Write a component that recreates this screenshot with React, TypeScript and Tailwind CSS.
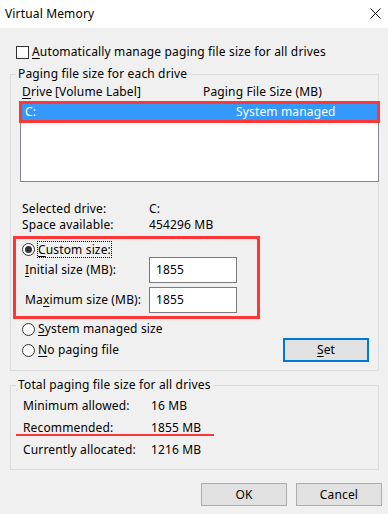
import React from "react";

function U({ children }: { children: React.ReactNode }) {
  return <span className="underline decoration-1 underline-offset-[2px]">{children}</span>;
}

function Radio({ checked }: { checked?: boolean }) {
  return (
    <span className="w-[13px] h-[13px] rounded-full border border-[#333333] bg-white flex items-center justify-center shrink-0">
      {checked && <span className="w-[7px] h-[7px] rounded-full bg-[#333333]" />}
    </span>
  );
}

function Btn({ children, focused }: { children: React.ReactNode; focused?: boolean }) {
  return (
    <button
      className={
        focused
          ? "w-[86px] h-[24px] bg-[#e1e1e1] border-2 border-[#0078d7] flex items-center justify-center"
          : "w-[86px] h-[23px] bg-[#e1e1e1] border border-[#adadad] flex items-center justify-center"
      }
    >
      {children}
    </button>
  );
}

export default function App() {
  return (
    <div className="w-[388px] h-[514px] bg-[#f0f0f0] text-[12px] leading-[16px] tracking-[0.15px] text-black font-['Noto_Sans',sans-serif] flex flex-col overflow-hidden">
      {/* Title bar */}
      <div className="h-[28px] shrink-0 bg-white flex items-center justify-between pl-[5px] pr-[7px]">
        <span className="text-[12px]">Virtual Memory</span>
        <svg width="11" height="11" viewBox="0 0 11 11" className="mt-[-2px]">
          <path d="M0.5 0.5 L10.5 10.5 M10.5 0.5 L0.5 10.5" stroke="#000" strokeWidth="1" />
        </svg>
      </div>

      <div className="pl-[10px] pr-[9px] flex flex-col">
        {/* Auto checkbox */}
        <div className="mt-[16px] ml-[6px] h-[16px] flex items-center gap-[3px]">
          <span className="w-[13px] h-[13px] border border-[#333333] bg-white shrink-0" />
          <span>
            <U>A</U>utomatically manage paging file size for all drives
          </span>
        </div>

        {/* Group 1 */}
        <fieldset className="mt-[6px] w-[369px] border border-[#dcdcdc]">
          <legend className="ml-[5px] px-[2px] leading-[16px]">Paging file size for each drive</legend>
          <div className="flex flex-col">
            <div className="mt-[2px] h-[16px] pl-[11px] flex">
              <span className="w-[33px]">
                <U>D</U>rive
              </span>
              <span className="w-[148px]">[Volume Label]</span>
              <span>Paging File Size (MB)</span>
            </div>

            <div className="relative mt-[1px] ml-[9px] -mr-[1px] h-[81px] bg-white border border-[#828790]">
              <div className="mt-[2px] mx-px h-[16px] bg-[#3399ff] text-white flex pl-[3px]">
                <span className="w-[211px]">C:</span>
                <span>System managed</span>
              </div>
              <div className="absolute left-[-2px] top-[-1px] w-[361px] h-[22px] border-[3px] border-[#ff3636]" />
            </div>

            <div className="mt-[19px] pl-[11px] flex">
              <span className="w-[127px]">Selected drive:</span>
              <span>C:</span>
            </div>
            <div className="pl-[11px] flex">
              <span className="w-[127px]">Space available:</span>
              <span>454296 MB</span>
            </div>

            {/* Custom size block */}
            <div className="relative mt-[8px] flex flex-col">
              <div className="h-[16px] pl-[11px] flex items-center gap-[2px]">
                <Radio checked />
                <span className="h-[17px] mt-[1px] border border-dotted border-black px-0 leading-[15px]">
                  <U>C</U>ustom size:
                </span>
              </div>
              <div className="h-[26px] pl-[14px] flex items-center">
                <span className="w-[124px]">
                  <U>I</U>nitial size (MB):
                </span>
                <div className="w-[88px] h-[26px] bg-white border border-[#7a7a7a] flex items-center pl-[6px]">
                  1855
                </div>
              </div>
              <div className="mt-[4px] h-[26px] pl-[14px] flex items-center">
                <span className="w-[124px]">
                  Ma<U>x</U>imum size (MB):
                </span>
                <div className="w-[88px] h-[26px] bg-white border border-[#7a7a7a] flex items-center pl-[6px]">
                  1855
                </div>
              </div>
              <div className="absolute left-[2px] top-[-5px] w-[247px] h-[83px] border-[3px] border-[#ff3636]" />
            </div>

            <div className="mt-[8px] h-[16px] pl-[11px] flex items-center gap-[3px]">
              <Radio />
              <span>
                <U>S</U>ystem managed size
              </span>
            </div>
            <div className="mt-[1px] h-[24px] pl-[11px] pr-[9px] flex items-center justify-between">
              <div className="flex items-center gap-[3px]">
                <Radio />
                <span>
                  <U>N</U>o paging file
                </span>
              </div>
              <Btn focused>
                <U>S</U>et
              </Btn>
            </div>
            <div className="h-[8px]" />
          </div>
        </fieldset>

        {/* Group 2 */}
        <fieldset className="mt-[6px] w-[369px] border border-[#dcdcdc]">
          <legend className="ml-[5px] px-[2px] leading-[16px]">Total paging file size for all drives</legend>
          <div className="mt-[2px] flex flex-col pl-[12px] pb-[8px] leading-[22px]">
            <div className="flex">
              <span className="w-[128px]">Minimum allowed:</span>
              <span>16 MB</span>
            </div>
            <div className="relative flex">
              <span className="w-[128px]">Recommended:</span>
              <span>1855 MB</span>
              <div className="absolute left-[-7px] top-[17px] w-[198px] h-[2px] bg-[#ff3636]" />
            </div>
            <div className="flex">
              <span className="w-[128px]">Currently allocated:</span>
              <span>1216 MB</span>
            </div>
          </div>
        </fieldset>
      </div>

      <div className="mt-[13px] pr-[6px] flex justify-end gap-[9px]">
        <Btn>OK</Btn>
        <Btn>Cancel</Btn>
      </div>
    </div>
  );
}
